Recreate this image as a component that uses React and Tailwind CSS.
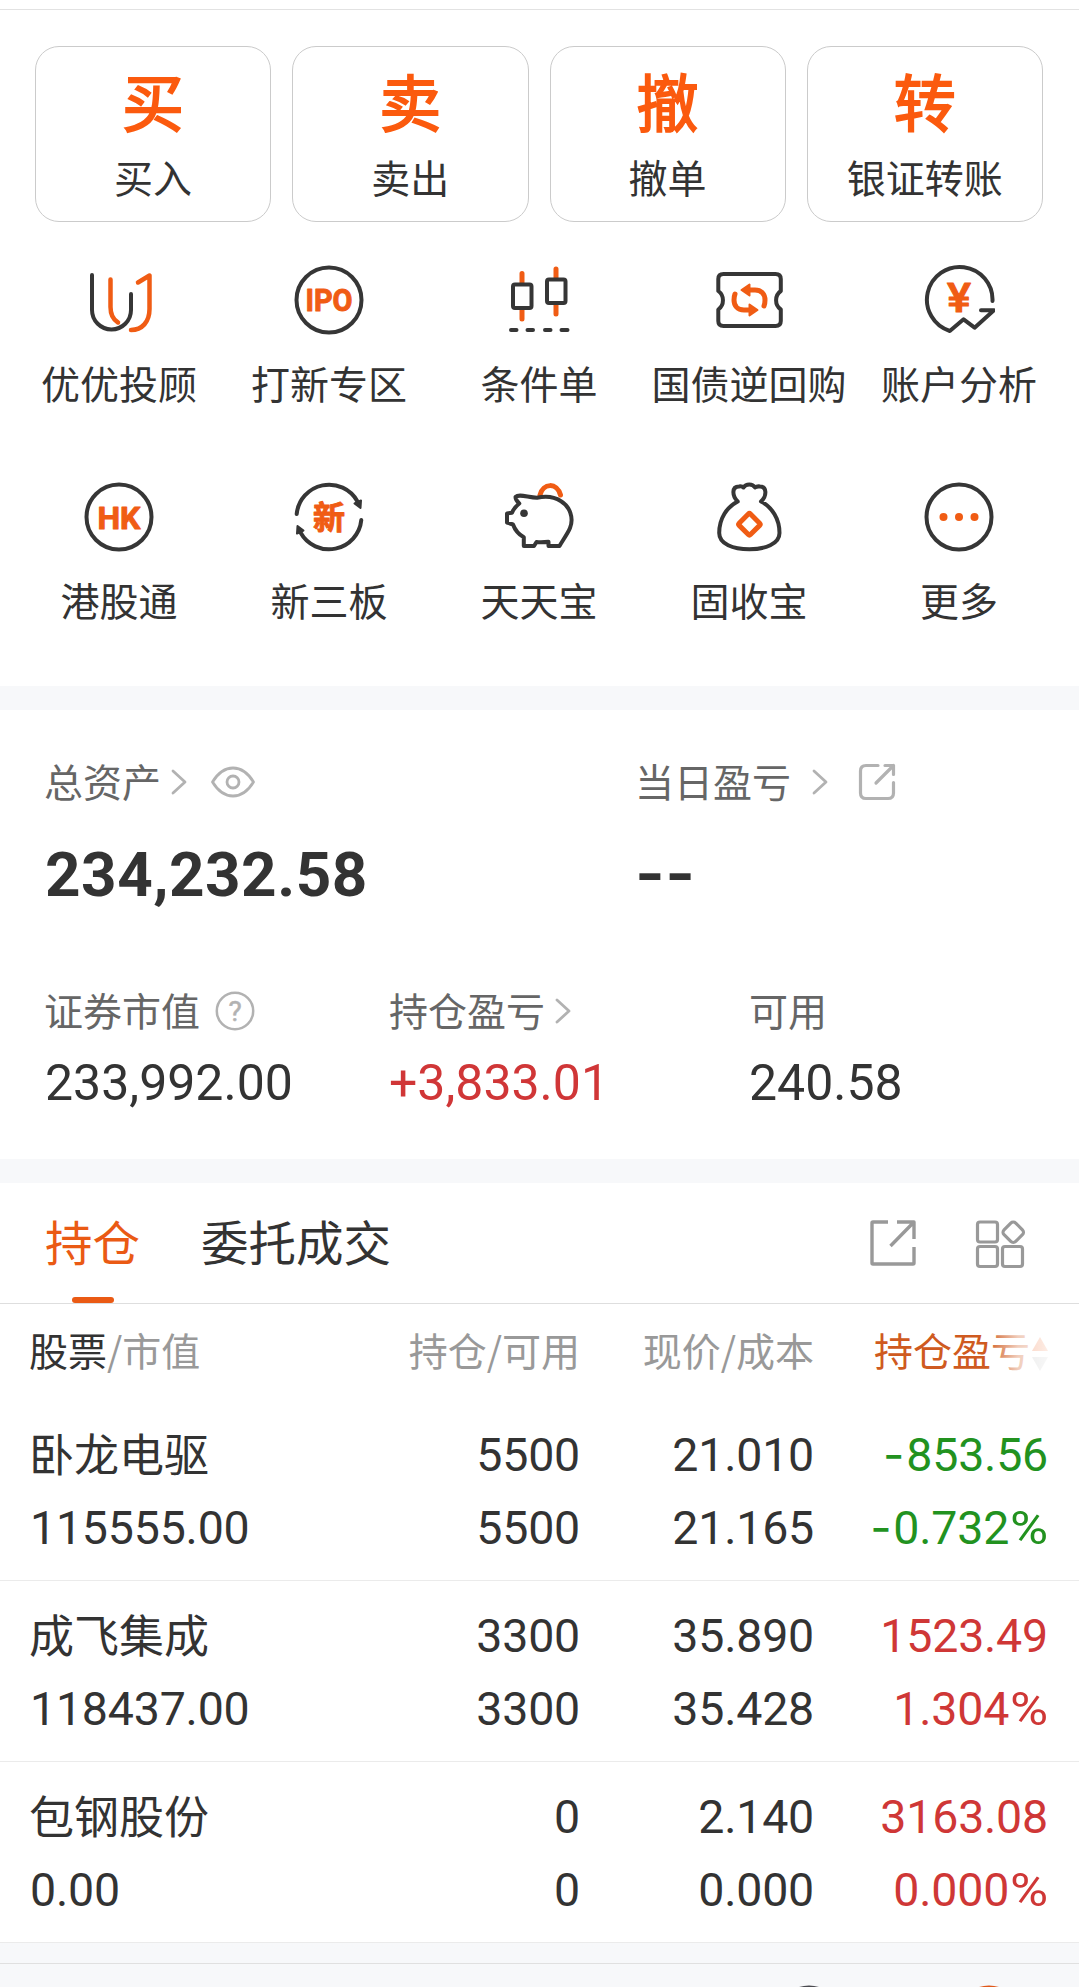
import clsx from "clsx";

const DARK = "#363636";
const ORANGE = "#f05c14";

const tradeActions = [
  { glyph: "买", label: "买入" },
  { glyph: "卖", label: "卖出" },
  { glyph: "撤", label: "撤单" },
  { glyph: "转", label: "银证转账" },
];

const positions = [
  { name: "卧龙电驱", value: "115555.00", hold: "5500", usable: "5500", price: "21.010", cost: "21.165", pnl: "-853.56", rate: "-0.732%" },
  { name: "成飞集成", value: "118437.00", hold: "3300", usable: "3300", price: "35.890", cost: "35.428", pnl: "1523.49", rate: "1.304%" },
  { name: "包钢股份", value: "0.00", hold: "0", usable: "0", price: "2.140", cost: "0.000", pnl: "3163.08", rate: "0.000%" },
];

function IconBox({ children }) {
  return (
    <svg viewBox="0 0 72 72" className="w-[72px] h-[72px]" fill="none" stroke={DARK} strokeWidth="4" strokeLinecap="round" strokeLinejoin="round">
      {children}
    </svg>
  );
}

function IconText({ children, size, y, width, weight = 700, font = "Roboto" }) {
  return (
    <text
      x="36"
      y={y}
      textAnchor="middle"
      textLength={width}
      lengthAdjust="spacingAndGlyphs"
      fontFamily={`${font}, "Noto Sans CJK SC", sans-serif`}
      fontSize={size}
      fontWeight={weight}
      fill={ORANGE}
      stroke={ORANGE}
      strokeWidth="1"
    >
      {children}
    </text>
  );
}

const AdvisorIcon = () => (
  <IconBox>
    <path d="M9 11V46A19.5 19.5 0 0 0 48 46V30" />
    <path d="M27.5 15.5V43C27.5 51 30 55.500 35 58.500" stroke={ORANGE} strokeWidth="4.500" />
    <path d="M55 18.500L66.500 11.500V45C66.500 58 59 66 48 66" stroke={ORANGE} strokeWidth="4.500" />
  </IconBox>
);

const IpoIcon = () => (
  <IconBox>
    <circle cx="36" cy="36" r="32.500" />
    <IconText size="31" y="47.200" width="47">IPO</IconText>
  </IconBox>
);

const ConditionIcon = () => (
  <IconBox>
    <path d="M19 9.500V19M19 46V55M53 5V14M53 41V50" stroke={ORANGE} strokeWidth="5" />
    <rect x="10" y="20.500" width="18.500" height="23.500" rx="2" />
    <rect x="44" y="15.500" width="18.500" height="23.500" rx="2" />
    <path d="M8 66h5.500M24.500 66h5.500M42 66h5.500M58.500 66h6" />
  </IconBox>
);

const TicketIcon = () => (
  <IconBox>
    <path d="M10.500 10H62.500Q67.800 10 67.800 15V27C61.500 31.500 61.500 41 67.800 45.500V57Q67.800 62 62.500 62H10.500Q5.300 62 5.300 57V45.500C11.500 41 11.500 31.500 5.300 27V15Q5.300 10 10.500 10Z" />
    {[0, 180].map((deg) => (
      <g key={deg} transform={`rotate(${deg} 36.500 36)`}>
        <path d="M37 26H42C49 26 52 31 52 36Q52 39.500 51 42" stroke={ORANGE} strokeWidth="5" />
        <path d="M28.500 26L36.500 20.500V31.500Z" fill={ORANGE} stroke={ORANGE} strokeWidth="2" />
      </g>
    ))}
  </IconBox>
);

const AnalysisIcon = () => (
  <IconBox>
    <path d="M69.500 37A32.800 32.800 0 1 0 26.800 67L40.600 55.300L51.600 63.700L71 46.300H58" />
    <IconText size="41" y="47.500" width="24" weight="500">¥</IconText>
  </IconBox>
);

const HkIcon = () => (
  <IconBox>
    <circle cx="36" cy="36" r="32.500" />
    <IconText size="31.500" y="47.500" width="43">HK</IconText>
  </IconBox>
);

const NewBoardIcon = () => (
  <IconBox>
    {[0, 180].map((deg) => (
      <g key={deg} transform={`rotate(${deg} 36 36)`}>
        <path d="M3.700 33A32.500 32.500 0 0 1 64.500 20.500" />
        <path d="M61.500 22.500L68 19.500L67.500 27Z" fill={DARK} strokeWidth="2" />
      </g>
    ))}
    <IconText size="32" y="47.800" font="Noto Sans CJK SC">新</IconText>
  </IconBox>
);

const PigIcon = () => (
  <IconBox>
    <path d="M37 14C40 2 54 1 57.500 14" stroke={ORANGE} strokeWidth="5" />
    <path d="M12.500 16C16 12.500 25 16.500 34 16.800C40 15.500 50 15 57.700 20C67 25.500 71 37 67 47C65 52 60 59 56.500 65H45.500V60.700Q39 61.500 33.500 61L31 65H20.800V56.300C15 53 12 49 10 43.500L4 41.500V32.500L9 31.700C10.500 28 12.500 25.500 16.300 22.500C13.500 20 12.500 18.500 12.500 16Z" />
    <circle cx="21" cy="32.300" r="3.800" fill={DARK} stroke="none" />
  </IconBox>
);

const BagIcon = () => (
  <IconBox>
    <path d="M24.700 20.500C19 15 18.500 5.500 26 5.500Q29 5 30.500 6.500C33 2.500 39.500 2.500 42 6.500Q44 5 47 5.500C54 5.500 54 15 48 20.500C59 26 66.500 38 66.500 52C66.500 63 52 68.300 36.400 68.300C20 68.300 6.200 63 6.200 52C6.200 37 14 26 24.700 20.500Z" />
    <rect x="28.400" y="35.300" width="16" height="16" rx="1.500" transform="rotate(45 36.400 43.300)" stroke={ORANGE} strokeWidth="5" />
  </IconBox>
);

const MoreIcon = () => (
  <IconBox>
    <circle cx="36" cy="36" r="32.500" />
    <g fill={ORANGE} stroke="none">
      <circle cx="20.500" cy="36" r="4" />
      <circle cx="36" cy="36" r="4" />
      <circle cx="51.500" cy="36" r="4" />
    </g>
  </IconBox>
);

const services = [
  { label: "优优投顾", Icon: AdvisorIcon },
  { label: "打新专区", Icon: IpoIcon },
  { label: "条件单", Icon: ConditionIcon },
  { label: "国债逆回购", Icon: TicketIcon },
  { label: "账户分析", Icon: AnalysisIcon },
  { label: "港股通", Icon: HkIcon },
  { label: "新三板", Icon: NewBoardIcon },
  { label: "天天宝", Icon: PigIcon },
  { label: "固收宝", Icon: BagIcon },
  { label: "更多", Icon: MoreIcon },
];

function Chevron({ className }) {
  return (
    <svg viewBox="0 0 16 26" className={clsx("w-4 h-[26px] shrink-0", className)} fill="none" stroke="#b2b2b2" strokeWidth="2.800" strokeLinecap="round" strokeLinejoin="round">
      <path d="M2 2L14 13L2 24" />
    </svg>
  );
}

// Signs are set a little wider than Roboto has them
function Num({ children }) {
  const negative = children.startsWith("-");
  const percent = children.endsWith("%");
  return (
    <span className="whitespace-nowrap">
      {negative && <span className="mr-0.5 leading-none font-[Inter,sans-serif]">-</span>}
      {children.replace(/[-%]/g, "")}
      {percent && <span className="ml-[5px] inline-block origin-right scale-x-[1.12]">%</span>}
    </span>
  );
}

function PositionRow({ item }) {
  const tone = item.pnl.startsWith("-") ? "text-[#22921f]" : "text-[#cf3736]";
  return (
    <div className="h-[181px] border-b border-[#ebebeb] pt-[19px] pl-[30px] grid grid-cols-[330px_220px_234px_234px] grid-rows-[73px_73px] text-[46.5px] tracking-[-0.2px] leading-[73px] text-right font-[Roboto,sans-serif] text-[#333]">
      <span className="-ml-px text-left text-[45px] tracking-normal leading-[67px] font-['Noto_Sans_CJK_SC',sans-serif]">{item.name}</span>
      <Num>{item.hold}</Num>
      <Num>{item.price}</Num>
      <span className={tone}><Num>{item.pnl}</Num></span>
      <span className="text-left"><Num>{item.value}</Num></span>
      <Num>{item.usable}</Num>
      <Num>{item.cost}</Num>
      <span className={tone}><Num>{item.rate}</Num></span>
    </div>
  );
}

export default function App() {
  return (
    <div className="w-[1079px] h-[1987px] overflow-hidden bg-white font-['Noto_Sans_CJK_SC',sans-serif] text-[#333] text-[39px] leading-[48px]">
      {/* Trade buttons and shortcuts */}
      <section className="h-[686px] pt-[9px]">
        <div className="border-t border-[#e2e2e2] pt-9 pl-[35px] pr-9 grid grid-cols-4 gap-[21px]">
          {tradeActions.map((a) => (
            <button key={a.label} className="h-[176px] border border-[#cbcbcb] rounded-[24px] flex flex-col items-center">
              <span className="mt-[23px] h-[60px] text-[62px] leading-[60px] text-[#fb5a0e] [-webkit-text-stroke:1.8px_#fb5a0e]">{a.glyph}</span>
              <span className="mt-[22px]">{a.label}</span>
            </button>
          ))}
        </div>
        <div className="mt-[42px] ml-[14px] mr-[15px] grid grid-cols-5 auto-rows-[217px]">
          {services.map(({ label, Icon }) => (
            <div key={label} className="flex flex-col items-center whitespace-nowrap">
              <Icon />
              <span className="mt-[22px]">{label}</span>
            </div>
          ))}
        </div>
      </section>

      <div className="h-6 bg-[#f7f8fa]" />

      {/* Assets */}
      <section className="h-[449px] pt-[46px] pl-[45px] text-[#666]">
        <div className="grid grid-cols-[590px_1fr]">
          <div>
            <div className="flex items-center h-[52px]">
              <span className="mb-1 -ml-px">总资产</span>
              <Chevron className="ml-[10px]" />
              <svg viewBox="0 0 46 34" className="ml-[23px] w-[46px] h-[34px]" fill="none" stroke="#b2b2b2" strokeWidth="2.800" strokeLinejoin="round">
                <path d="M2.500 17C8 8 15 3 23 3S38 8 43.500 17C38 26 31 31 23 31S8 26 2.500 17Z" />
                <circle cx="23" cy="17" r="6" />
              </svg>
            </div>
            <div className="mt-[31px] text-[62px] leading-[72px] tracking-[0.5px] font-bold text-[#333] font-[Roboto,sans-serif]">234,232.58</div>
          </div>
          <div>
            <div className="flex items-center h-[52px]">
              <span className="mb-1">当日盈亏</span>
              <Chevron className="ml-[21px]" />
              <svg viewBox="0 0 38 38" className="ml-[30px] w-[38px] h-[38px]" fill="none" stroke="#b2b2b2" strokeWidth="3.200" strokeLinecap="round" strokeLinejoin="round">
                <path d="M20 2.500H8Q2.500 2.500 2.500 8V30Q2.500 35.500 8 35.500H30Q35.500 35.500 35.500 30V19.500" />
                <path d="M27 2.500H35.500V11.500M35.500 2.500L18 20" />
              </svg>
            </div>
            <div className="mt-[29px] mb-px text-[64px] leading-[72px] tracking-[0.5px] font-semibold text-[#333] font-[Inter,sans-serif]">--</div>
          </div>
        </div>
        <div className="mt-[74px] grid grid-cols-[344px_360px_1fr]">
          <div className="flex items-center h-[52px]">
            <span className="mb-1 -ml-px">证券市值</span>
            <svg viewBox="0 0 40 40" className="ml-[15px] w-10 h-10" fill="none" stroke="#b2b2b2" strokeWidth="2.500">
              <circle cx="20" cy="20" r="18.200" />
              <text x="20" y="30" textAnchor="middle" fontFamily="Roboto, sans-serif" fontSize="28" fill="#b2b2b2" stroke="#b2b2b2" strokeWidth="0.500">?</text>
            </svg>
          </div>
          <div className="flex items-center h-[52px]">
            <span className="mb-1">持仓盈亏</span>
            <Chevron className="ml-[10px]" />
          </div>
          <div className="flex items-center h-[52px]">
            <span className="mb-1">可用</span>
          </div>
        </div>
        <div className="mt-[16px] grid grid-cols-[344px_360px_1fr] text-[50px] leading-[60px] text-[#333] font-[Roboto,sans-serif]">
          <span>233,992.00</span>
          <span className="text-[#d03637]">+3,833.01</span>
          <span>240.58</span>
        </div>
      </section>

      <div className="h-6 bg-[#f7f8fa]" />

      {/* Tabs */}
      <nav className="h-[121px] border-b border-[#dedede] flex pl-[45px] pr-[52px] text-[47.5px] leading-[116px]">
        <div className="flex flex-col items-center text-[#ea5a14]">
          <span className="h-[114px]">持仓</span>
          <span className="w-[42px] h-1.5 rounded-full bg-[#ea5a14]" />
        </div>
        <span className="ml-[61px]">委托成交</span>
        <div className="ml-auto mt-[36px] flex h-[50px] items-start">
          <svg viewBox="0 0 48 48" className="w-12 h-12" fill="none" stroke="#999" strokeWidth="3.400" strokeLinejoin="round">
            <path d="M19 3H4Q3 3 3 4V44Q3 45 4 45H44Q45 45 45 44V28" />
            <path d="M28 3H45V20M45 3L21.500 27" />
          </svg>
          <svg viewBox="0 0 52 52" className="ml-[58px] w-[52px] h-[52px]" fill="none" stroke="#999" strokeWidth="3.200">
            <rect x="2.500" y="3" width="20" height="20" rx="2.500" />
            <rect x="2.500" y="27.500" width="20" height="20" rx="2.500" />
            <rect x="27.500" y="27.500" width="20" height="20" rx="2.500" />
            <rect x="30" y="5" width="16.500" height="16.500" rx="3.500" transform="rotate(45 38.250 13.250)" />
          </svg>
        </div>
      </nav>

      {/* Positions */}
      <div className="relative h-24 pl-[29px] grid grid-cols-[331px_220px_234px_234px] text-right text-[#999] leading-[91px]">
        <span className="text-left"><span className="text-[#333]">股票</span>/市值</span>
        <span>持仓/可用</span>
        <span>现价/成本</span>
        <div className="flex items-start justify-end text-[#cf5a20]">
          <span>持仓盈亏</span>
          <svg viewBox="0 0 16 34" className="ml-0.5 mt-[33px] w-4 h-[34px]">
            <path d="M8 0L16 14H0Z" fill="#ee5f1c" />
            <path d="M8 34L0 20H16Z" fill="#bbb" />
          </svg>
        </div>
        <div className="absolute right-[29px] top-0 h-full w-[64px] bg-linear-to-r from-white/0 via-white/70 to-white/90" />
      </div>
      {positions.map((p) => (
        <PositionRow key={p.name} item={p} />
      ))}

      {/* Bottom bar */}
      <footer className="h-[44px] pt-5 bg-[#f7f8fa]">
        <div className="h-6 border-t border-[#e0e0e0] overflow-hidden">
          <svg viewBox="0 0 1079 23" className="w-[1079px] h-[23px]" fill="none" strokeWidth="4">
            <circle cx="809" cy="53.500" r="30" stroke="#4a4a50" />
            <circle cx="989" cy="53.500" r="30" stroke="#e0581a" />
          </svg>
        </div>
      </footer>
    </div>
  );
}
